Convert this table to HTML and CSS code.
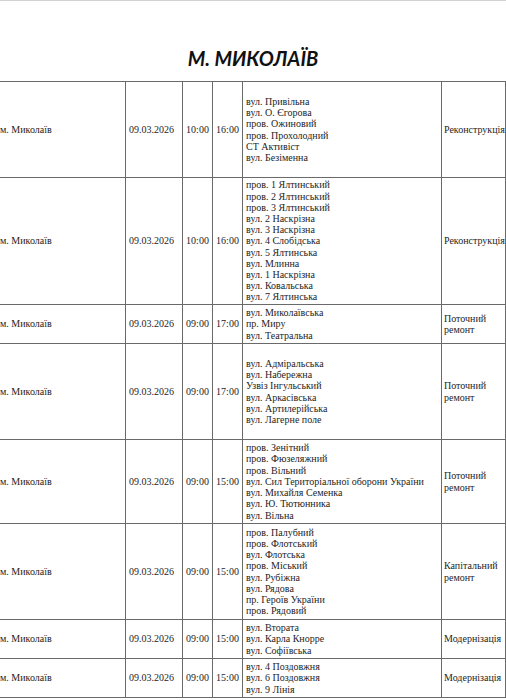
FILE: index.html
```html
<!DOCTYPE html>
<html lang="uk">
<head>
<meta charset="utf-8">
<title>м. Миколаїв</title>
<link rel="stylesheet" href="styles.css">
</head>
<body>
<div class="topline"></div>
<h1 class="title">М. МИКОЛАЇВ</h1>
<table class="sched">
  <colgroup>
    <col class="c-city"><col class="c-date"><col class="c-t1"><col class="c-t2"><col class="c-str"><col class="c-type">
  </colgroup>
  <tbody>
    <tr class="h96">
      <td class="city">м. Миколаїв</td><td class="date">09.03.2026</td><td class="time">10:00</td><td class="time">16:00</td>
      <td class="str">вул. Привільна<br>вул. О. Єгорова<br>пров. Ожиновий<br>пров. Прохолодний<br>СТ Активіст<br>вул. Безіменна</td>
      <td class="type">Реконструкція</td>
    </tr>
    <tr class="h127">
      <td class="city">м. Миколаїв</td><td class="date">09.03.2026</td><td class="time">10:00</td><td class="time">16:00</td>
      <td class="str">пров. 1 Ялтинський<br>пров. 2 Ялтинський<br>пров. 3 Ялтинський<br>вул. 2 Наскрізна<br>вул. 3 Наскрізна<br>вул. 4 Слобідська<br>вул. 5 Ялтинська<br>вул. Млинна<br>вул. 1 Наскрізна<br>вул. Ковальська<br>вул. 7 Ялтинська</td>
      <td class="type">Реконструкція</td>
    </tr>
    <tr class="h39">
      <td class="city">м. Миколаїв</td><td class="date">09.03.2026</td><td class="time">09:00</td><td class="time">17:00</td>
      <td class="str">вул. Миколаївська<br>пр. Миру<br>вул. Театральна</td>
      <td class="type">Поточний ремонт</td>
    </tr>
    <tr class="h96">
      <td class="city">м. Миколаїв</td><td class="date">09.03.2026</td><td class="time">09:00</td><td class="time">17:00</td>
      <td class="str">вул. Адміральська<br>вул. Набережна<br>Узвіз Інгульський<br>вул. Аркасівська<br>вул. Артилерійська<br>вул. Лагерне поле</td>
      <td class="type">Поточний ремонт</td>
    </tr>
    <tr class="h84">
      <td class="city">м. Миколаїв</td><td class="date">09.03.2026</td><td class="time">09:00</td><td class="time">15:00</td>
      <td class="str">пров. Зенітний<br>пров. Фюзеляжний<br>пров. Вільний<br>вул. Сил Територіальної оборони України<br>вул. Михайля Семенка<br>вул. Ю. Тютюнника<br>вул. Вільна</td>
      <td class="type">Поточний ремонт</td>
    </tr>
    <tr class="h96">
      <td class="city">м. Миколаїв</td><td class="date">09.03.2026</td><td class="time">09:00</td><td class="time">15:00</td>
      <td class="str">пров. Палубний<br>пров. Флотський<br>вул. Флотська<br>пров. Міський<br>вул. Рубіжна<br>вул. Рядова<br>пр. Героїв України<br>пров. Рядовий</td>
      <td class="type">Капітальний ремонт</td>
    </tr>
    <tr class="h39">
      <td class="city">м. Миколаїв</td><td class="date">09.03.2026</td><td class="time">09:00</td><td class="time">15:00</td>
      <td class="str">вул. Втората<br>вул. Карла Кнорре<br>вул. Софіївська</td>
      <td class="type">Модернізація</td>
    </tr>
    <tr class="h39">
      <td class="city">м. Миколаїв</td><td class="date">09.03.2026</td><td class="time">09:00</td><td class="time">15:00</td>
      <td class="str">вул. 4 Поздовжня<br>вул. 6 Поздовжня<br>вул. 9 Лінія</td>
      <td class="type">Модернізація</td>
    </tr>
  </tbody>
</table>
</body>
</html>
```

FILE: styles.css
```css
* { box-sizing: border-box; }
html, body { margin: 0; padding: 0; background: #fff; }
body { width: 506px; height: 700px; overflow: hidden; }

.topline { height: 1px; background: #d2d2d2; }

.title {
  margin: 47px 0 13px;
  font-family: Lato, "Open Sans", sans-serif;
  font-weight: 700;
  font-style: italic;
  font-size: 20px;
  line-height: 20px;
  text-align: center;
  color: #111;
}

.sched {
  width: 506px;
  table-layout: fixed;
  border-collapse: separate;
  border-spacing: 0;
  border-top: 1px solid #6a6a6a;
  font-family: "Liberation Serif", "Times New Roman", serif;
  font-size: 10px;
  line-height: 11.2px;
  color: #1e1e1e;
}

.c-city { width: 126px; }
.c-date { width: 57px; }
.c-t1 { width: 30px; }
.c-t2 { width: 30px; }
.c-str { width: 199px; }
.c-type { width: 64px; }

.sched td {
  border-right: 1px solid #6a6a6a;
  border-bottom: 1px solid #6a6a6a;
  padding: 0 3px;
  vertical-align: middle;
  white-space: nowrap;
  overflow: visible;
}

.sched td.city { padding-left: 0; }
.sched td.time { padding: 0; text-align: center; }
.sched td.str { padding-left: 3px; }
.sched td.type { white-space: normal; padding: 0 2px 0 2px; word-break: keep-all; }

.h96 td { height: 96px; }
.h127 td { height: 127px; }
.h39 td { height: 39px; }
.h84 td { height: 84px; }
```
